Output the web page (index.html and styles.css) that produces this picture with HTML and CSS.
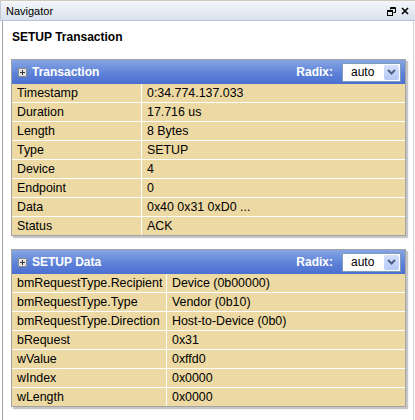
FILE: index.html
```
<!DOCTYPE html>
<html>
<head>
<meta charset="utf-8">
<link rel="stylesheet" href="styles.css">
</head>
<body>
<div class="window">
  <div class="titlebar">
    <span class="title">Navigator</span>
    <span class="tools">
      <svg class="ico" width="9" height="9" viewBox="0 0 9 9"><path d="M3.5 0.5h5v5h-2M3.5 0.5v2M3.5 1.5h5" fill="none" stroke="#000" stroke-width="1"/><rect x="0.5" y="3.5" width="5" height="5" fill="none" stroke="#000"/><path d="M0.5 4.5h5" stroke="#000"/></svg>
      <svg class="ico" width="8" height="8" viewBox="0 0 8 8"><path d="M1 1l6 6M7 1l-6 6" stroke="#000" stroke-width="1.6"/></svg>
    </span>
  </div>
  <div class="content">
    <h1 class="heading">SETUP Transaction</h1>

    <div class="panel">
      <div class="phead">
        <span class="plus"></span>
        <span class="ptitle">Transaction</span>
        <span class="radix">Radix:</span>
        <span class="select"><span class="sval">auto</span><span class="sbtn"><svg width="9" height="6" viewBox="0 0 9 6"><path d="M1 1l3.5 3.5L8 1" fill="none" stroke="#4d6185" stroke-width="2"/></svg></span></span>
      </div>
      <div class="rows c1">
        <div class="k">Timestamp</div><div class="v">0:34.774.137.033</div>
        <div class="k">Duration</div><div class="v">17.716 us</div>
        <div class="k">Length</div><div class="v">8 Bytes</div>
        <div class="k">Type</div><div class="v">SETUP</div>
        <div class="k">Device</div><div class="v">4</div>
        <div class="k">Endpoint</div><div class="v">0</div>
        <div class="k">Data</div><div class="v">0x40 0x31 0xD0 ...</div>
        <div class="k">Status</div><div class="v">ACK</div>
      </div>
    </div>

    <div class="panel second">
      <div class="phead">
        <span class="plus"></span>
        <span class="ptitle">SETUP Data</span>
        <span class="radix">Radix:</span>
        <span class="select"><span class="sval">auto</span><span class="sbtn"><svg width="9" height="6" viewBox="0 0 9 6"><path d="M1 1l3.5 3.5L8 1" fill="none" stroke="#4d6185" stroke-width="2"/></svg></span></span>
      </div>
      <div class="rows c2">
        <div class="k">bmRequestType.Recipient</div><div class="v">Device (0b00000)</div>
        <div class="k">bmRequestType.Type</div><div class="v">Vendor (0b10)</div>
        <div class="k">bmRequestType.Direction</div><div class="v">Host-to-Device (0b0)</div>
        <div class="k">bRequest</div><div class="v">0x31</div>
        <div class="k">wValue</div><div class="v">0xffd0</div>
        <div class="k">wIndex</div><div class="v">0x0000</div>
        <div class="k">wLength</div><div class="v">0x0000</div>
      </div>
    </div>
  </div>
</div>
</body>
</html>
```
FILE: styles.css
```
html, body {
  margin: 0;
  padding: 0;
  background: #fff;
}
body {
  font-family: "Liberation Sans", Arial, sans-serif;
  font-size: 12px;
  color: #000;
}
.window {
  width: 415px;
  height: 420px;
  display: flex;
  flex-direction: column;
  border-top: 1px solid #cfcabb;
  box-sizing: border-box;
  overflow: hidden;
}
.titlebar {
  height: 20px;
  box-sizing: border-box;
  display: flex;
  align-items: center;
  padding: 0 6px 0 5px;
  background: linear-gradient(#f4f6fa, #d9e1ed);
  border-bottom: 1px solid #b9c3d2;
  border-left: 1px solid #c6cbd3;
}
.title {
  font-size: 11px;
  flex: 1;
}
.tools {
  display: flex;
  align-items: center;
  gap: 5px;
  margin-top: 1px;
}
.ico {
  display: block;
}
.content {
  flex: 1;
  margin-left: 2px;
  border-left: 1px solid #a6a6a6;
  border-right: 1px solid #d3d3d3;
  margin-right: 1px;
  padding: 9px 7px 0 8px;
}
.heading {
  margin: 0 0 15px 1px;
  font-size: 12px;
  font-weight: bold;
  height: 14px;
  line-height: 14px;
}
.panel {
  border: 1px solid #a3a3a3;
  box-shadow: 2px 2px 1px #c6c6c6;
  background: #fff;
}
.panel.second {
  margin-top: 13px;
}
.phead {
  height: 24px;
  display: flex;
  align-items: center;
  background: linear-gradient(#86a6e4, #5e82d8 55%, #4b6fd0);
  color: #fff;
  font-weight: bold;
  padding: 0 4px 0 5px;
}
.plus {
  width: 9px;
  height: 9px;
  box-sizing: border-box;
  border: 1px solid #8c8c8c;
  background:
    linear-gradient(#333, #333) center / 5px 1px no-repeat,
    linear-gradient(#333, #333) center / 1px 5px no-repeat,
    #e4e4e4;
  margin: 0 5px 0 1px;
}
.ptitle {
  flex: 1;
}
.radix {
  margin-right: 9px;
}
.select {
  width: 59px;
  height: 19px;
  box-sizing: border-box;
  border: 1px solid #7f9db9;
  background: #fff;
  display: flex;
  align-items: center;
  color: #000;
  font-weight: normal;
}
.sval {
  flex: 1;
  padding-left: 8px;
}
.sbtn {
  width: 15px;
  height: 15px;
  margin-right: 1px;
  background: linear-gradient(#d4e0fd, #b5c9f7);
  border-radius: 2px;
  display: flex;
  align-items: center;
  justify-content: center;
}
.rows {
  display: grid;
  row-gap: 1px;
  background: #fff;
}
.c1 { grid-template-columns: 130px 1fr; }
.c2 { grid-template-columns: 155px 1fr; }
.k, .v {
  background: #ecd9a3;
  height: 18px;
  line-height: 18px;
  padding-left: 5px;
  white-space: nowrap;
  font-size: 12.4px;
}
.k {
  border-right: 1px solid #fff;
}
```
